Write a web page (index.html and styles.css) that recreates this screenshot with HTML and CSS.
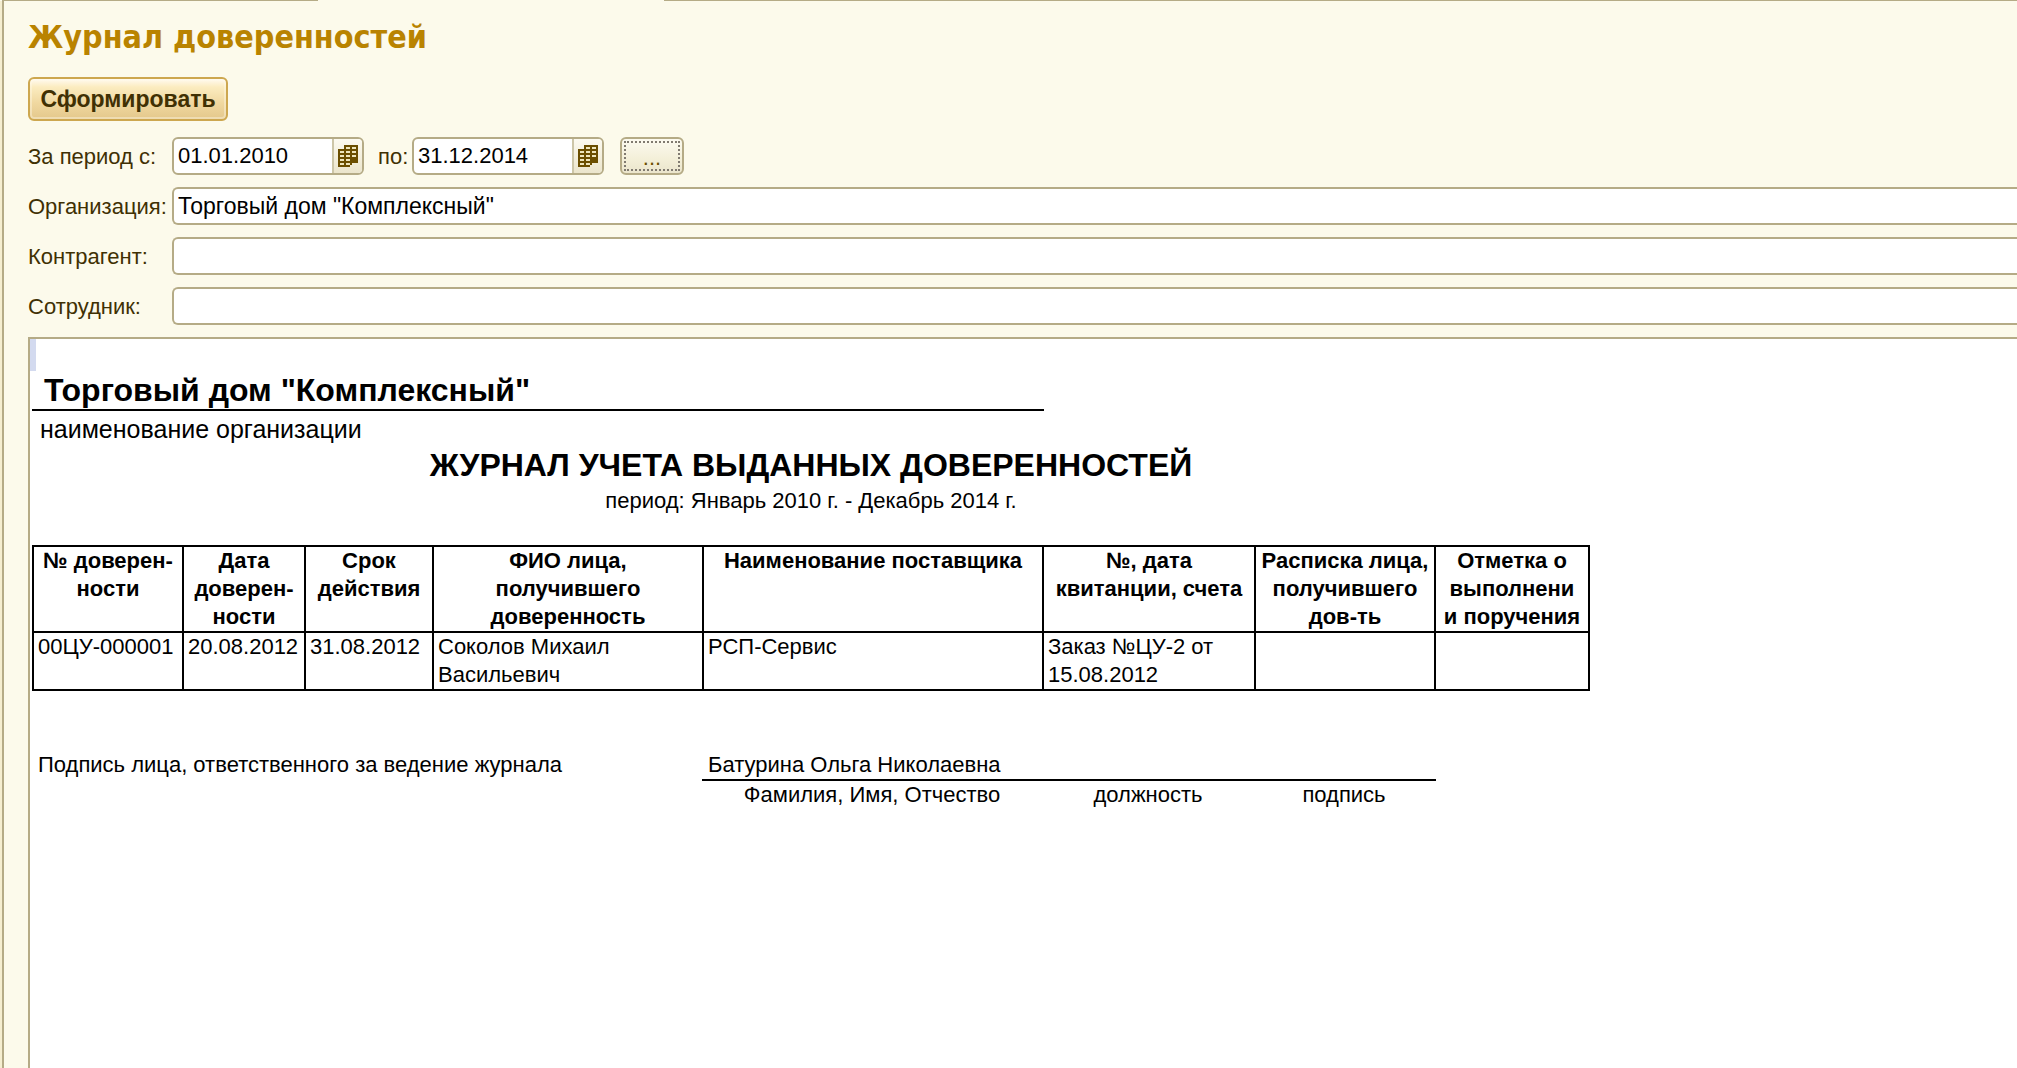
FILE: index.html
```
<!DOCTYPE html>
<html lang="ru">
<head>
<meta charset="utf-8">
<title>Журнал доверенностей</title>
<link rel="stylesheet" href="styles.css">
</head>
<body>
<svg class="sprite" aria-hidden="true">
  <symbol id="calendar" viewBox="0 0 20 22">
    <path d="M6 0h14v18h-6v4H0V4h6z" fill="#6b4e00"/>
    <path d="M8 2h4v2H8zM14 2h4v2h-4zM2 6h4v2H2zM8 6h4v2H8zM14 6h4v2h-4zM2 10h4v2H2zM8 10h4v2H8zM14 10h4v2h-4zM2 14h4v2H2zM8 14h4v2H8zM2 18h4v2H2zM8 18h4v2H8z" fill="#efe6bd"/>
    <path d="M12 20h2v2h-2z" fill="#efe9d2"/>
  </symbol>
</svg>
<div class="tab-edge"><span class="tab-edge-left"></span><span class="tab-edge-gap"></span><span class="tab-edge-right"></span></div>
<main class="window">
  <h1 class="window-title">Журнал доверенностей</h1>
  <form class="filters">
    <button class="run" type="button">Сформировать</button>
    <div class="row">
      <label class="label" for="from">За период с:</label>
      <div class="date">
        <input class="date-input" id="from" type="text" value="01.01.2010">
        <button class="date-pick" type="button" aria-label="Выбрать дату начала"><svg class="icon"><use href="#calendar"/></svg></button>
      </div>
      <label class="label-to" for="to">по:</label>
      <div class="date">
        <input class="date-input" id="to" type="text" value="31.12.2014">
        <button class="date-pick" type="button" aria-label="Выбрать дату окончания"><svg class="icon"><use href="#calendar"/></svg></button>
      </div>
      <button class="more" type="button"><span class="more-focus">...</span></button>
    </div>
    <div class="row">
      <label class="label" for="org">Организация:</label>
      <input class="field" id="org" type="text" value="Торговый дом &quot;Комплексный&quot;">
    </div>
    <div class="row">
      <label class="label" for="partner">Контрагент:</label>
      <input class="field" id="partner" type="text">
    </div>
    <div class="row">
      <label class="label" for="employee">Сотрудник:</label>
      <input class="field" id="employee" type="text">
    </div>
  </form>
  <section class="report">
    <div class="cell-marker"></div>
    <div class="sheet">
      <p class="org-name">Торговый дом "Комплексный"</p>
      <p class="org-caption">наименование организации</p>
      <h2 class="report-title">ЖУРНАЛ УЧЕТА ВЫДАННЫХ ДОВЕРЕННОСТЕЙ</h2>
      <p class="report-period">период: Январь 2010 г. - Декабрь 2014 г.</p>
      <table class="journal">
        <colgroup>
          <col class="col-number"><col class="col-date"><col class="col-term"><col class="col-person"><col class="col-supplier"><col class="col-receipt"><col class="col-sign"><col class="col-mark">
        </colgroup>
        <thead>
          <tr>
            <th>№ доверен-<br>ности</th>
            <th>Дата<br>доверен-<br>ности</th>
            <th>Срок<br>действия</th>
            <th>ФИО лица,<br>получившего<br>доверенность</th>
            <th>Наименование поставщика</th>
            <th>№, дата<br>квитанции, счета</th>
            <th>Расписка лица,<br>получившего<br>дов-ть</th>
            <th>Отметка о<br>выполнени<br>и поручения</th>
          </tr>
        </thead>
        <tbody>
          <tr>
            <td>00ЦУ-000001</td>
            <td>20.08.2012</td>
            <td>31.08.2012</td>
            <td>Соколов Михаил<br>Васильевич</td>
            <td>РСП-Сервис</td>
            <td>Заказ №ЦУ-2 от<br>15.08.2012</td>
            <td></td>
            <td></td>
          </tr>
        </tbody>
      </table>
      <div class="signature">
        <p class="signature-label">Подпись лица, ответственного за ведение журнала</p>
        <div class="signature-block">
          <p class="signature-name">Батурина Ольга Николаевна</p>
          <div class="signature-captions">
            <span>Фамилия, Имя, Отчество</span>
            <span>должность</span>
            <span>подпись</span>
          </div>
        </div>
      </div>
    </div>
  </section>
</main>
</body>
</html>
```
FILE: styles.css
```
* { box-sizing: border-box; }

body {
  margin: 0;
  min-height: 100vh;
  display: flex;
  flex-direction: column;
  overflow-x: hidden;
  background: #fcfaeb;
  color: #403003;
  font: 22px/28px "Liberation Sans", Arial, sans-serif;
}

h1, h2, p { margin: 0; }
input, button { font: inherit; margin: 0; }
.sprite { display: none; }

/* upper edge of the window, open under the active tab */
.tab-edge { display: flex; height: 1px; padding-left: 2px; }
.tab-edge-left { width: 316px; background: #b5ab86; }
.tab-edge-gap { width: 346px; }
.tab-edge-right { flex: 1; background: #b5ab86; }

.window {
  flex: 1;
  display: flex;
  flex-direction: column;
  margin-left: 2px;
  padding: 16px 0 0 24px;
  border-left: 2px solid #b5ab86;
  box-shadow: -2px 0 #f5eed0;
}

.window-title {
  color: #b98300;
  font: bold 32px/40px "DejaVu Sans Condensed", "DejaVu Sans", sans-serif;
}

.filters {
  display: flex;
  flex-direction: column;
  gap: 12px;
  padding: 20px 0 12px;
}

.run {
  align-self: flex-start;
  width: 200px;
  height: 44px;
  margin-bottom: 4px;
  padding: 0;
  border: 2px solid #cda74f;
  border-radius: 6px;
  background: linear-gradient(#fffaf0, #fbecc0 20%, #f0d8a0 60%, #e4c88c);
  box-shadow: inset 0 0 0 2px rgba(255, 250, 235, 0.4);
  color: #403003;
  font-size: 23px;
  font-weight: bold;
}

.row { display: flex; align-items: center; height: 38px; }
.label { flex: none; width: 144px; padding-top: 2px; }
.label-to { width: 48px; padding: 2px 0 0 14px; }

.field, .date, .more {
  height: 38px;
  border: 2px solid #b5ab86;
  border-radius: 6px;
}

.field {
  flex: 1;
  min-width: 0;
  padding: 0 4px;
  border-right: 0;
  border-radius: 6px 0 0 6px;
  background: #fff;
  color: #000;
  font-size: 23px;
}

.date { display: flex; width: 192px; overflow: hidden; background: #fff; }
.date-input {
  flex: 1;
  min-width: 0;
  padding: 0 4px;
  border: 0;
  background: none;
  color: #000;
}
.date-pick {
  display: grid;
  place-items: center;
  width: 30px;
  padding: 0;
  border: 0;
  border-left: 2px solid #cdc6a8;
  background: linear-gradient(#fcfaf0, #ebe5cc);
}
.icon { width: 20px; height: 22px; }

.more {
  width: 64px;
  margin-left: 16px;
  padding: 2px;
  background: linear-gradient(#fcfaf0, #f3efd8 60%, #ebe5cc);
  color: #6b4e00;
}
.more-focus {
  display: block;
  height: 30px;
  border: 2px dotted #807a70;
  line-height: 30px;
}

.report {
  flex: 1;
  border: solid #b5ab86;
  border-width: 2px 0 0 2px;
  background: #fff;
  color: #000;
}
.cell-marker { width: 6px; height: 32px; background: #d3daef; }
.sheet { width: 1558px; margin-left: 2px; }

.org-name {
  width: 1012px;
  padding-left: 12px;
  border-bottom: 2px solid #000;
  font-size: 32px;
  font-weight: bold;
  line-height: 38px;
}
.org-caption { padding-left: 8px; font-size: 25px; line-height: 36px; }
.report-title { font-size: 32px; line-height: 36px; text-align: center; }
.report-period { line-height: 36px; text-align: center; }

.journal {
  width: 1558px;
  margin-top: 26px;
  border-collapse: collapse;
  table-layout: fixed;
}
.journal th, .journal td { padding: 0 4px; border: 2px solid #000; vertical-align: top; white-space: nowrap; }
.journal th { padding: 0; }
.journal td { height: 58px; text-align: left; }
.col-number { width: 150px; }
.col-date { width: 122px; }
.col-term { width: 128px; }
.col-person { width: 270px; }
.col-supplier { width: 340px; }
.col-receipt { width: 212px; }
.col-sign { width: 180px; }
.col-mark { width: 154px; }

.signature { display: flex; padding-top: 60px; }
.signature-label { width: 670px; padding-left: 6px; }
.signature-block { width: 734px; }
.signature-name { padding-left: 6px; border-bottom: 2px solid #000; }
.signature-captions {
  display: grid;
  grid-template-columns: 340px 212px 180px;
  text-align: center;
}
```
